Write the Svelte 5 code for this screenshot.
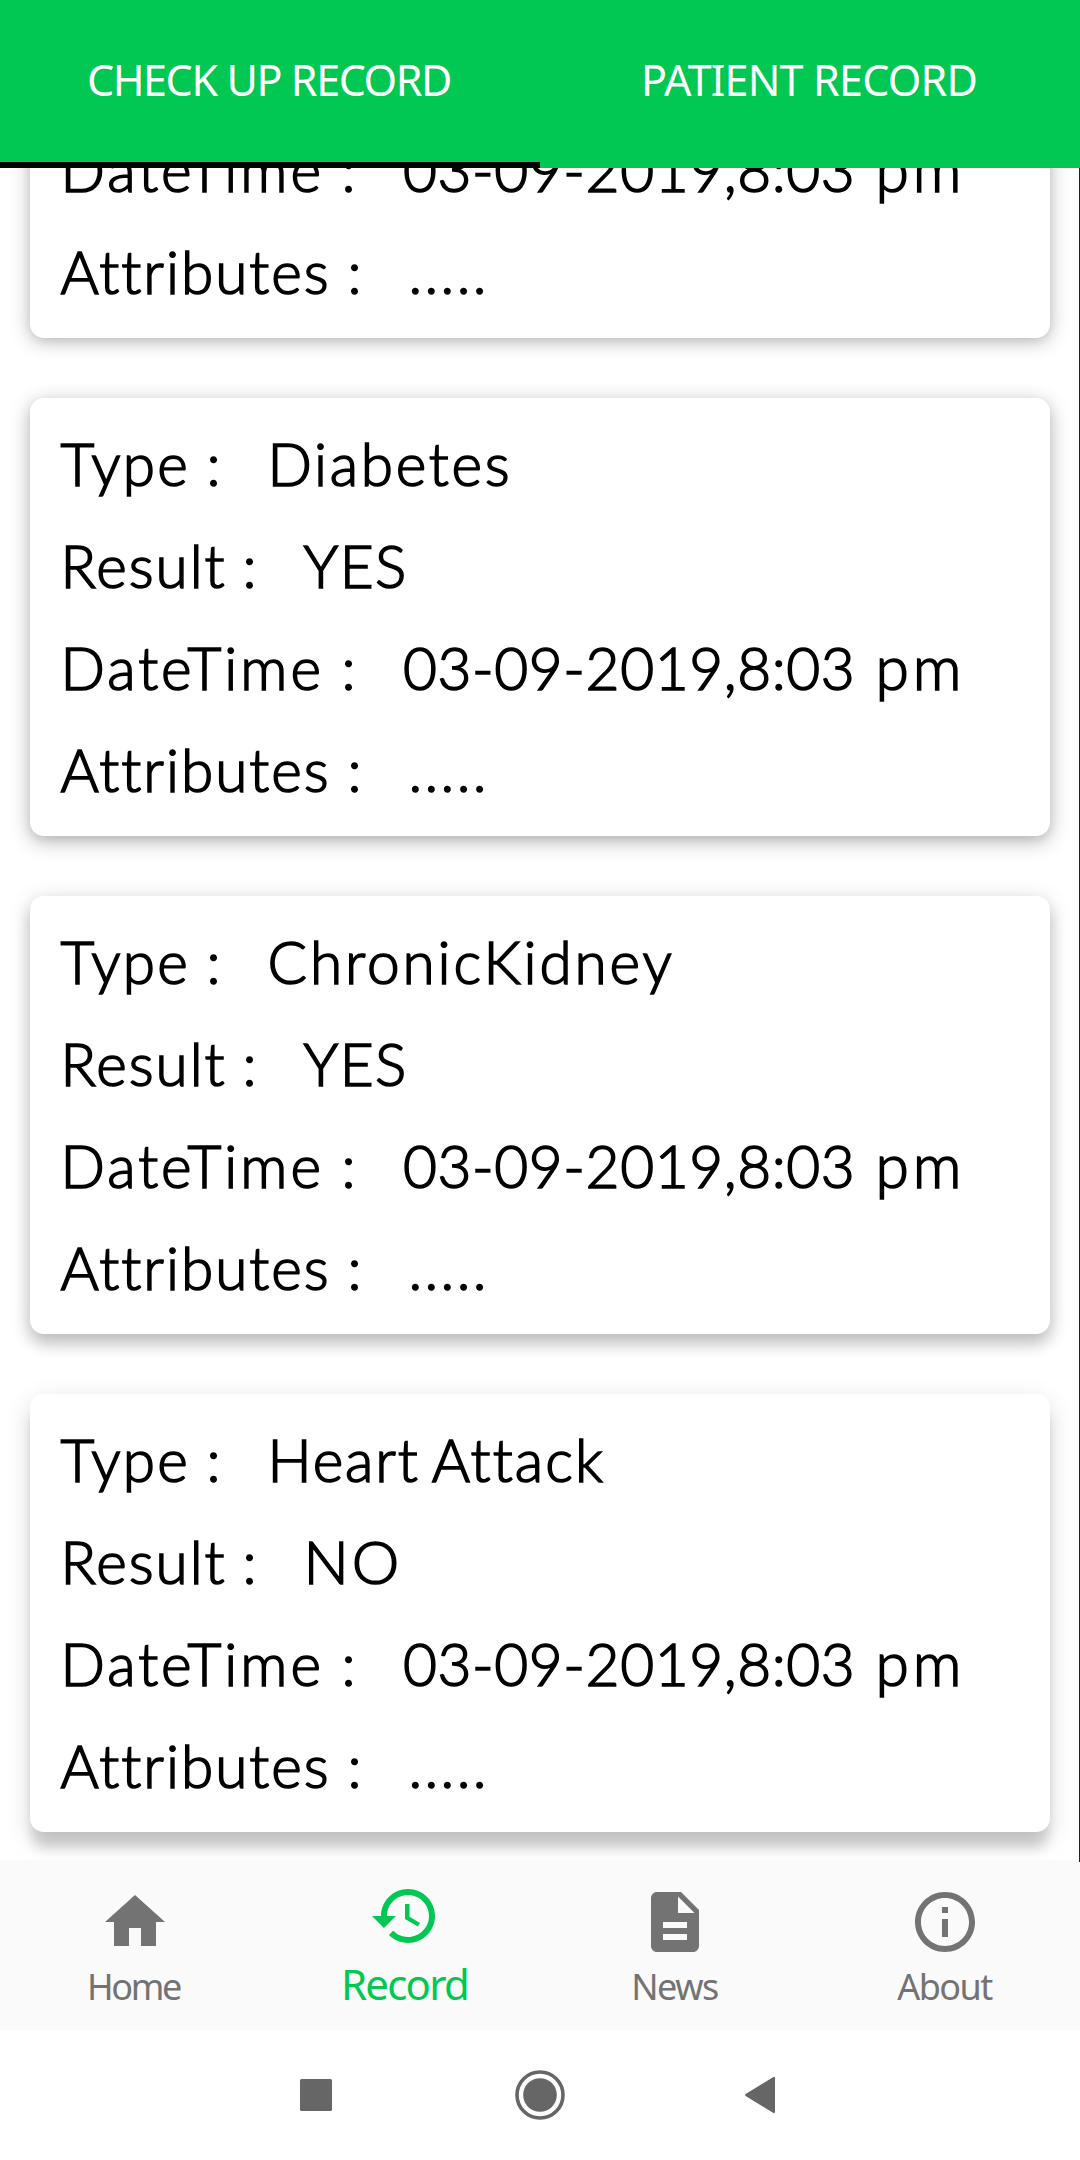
<script>
  const when = [
    { text: '03-09-2019,8:03', cls: 'date' },
    { text: 'pm', cls: 'pm' }
  ];
  const stamp = [
    { label: 'DateTime', cls: 'datetime', value: when },
    { label: 'Attributes', cls: 'attributes', value: [{ text: '.....', cls: 'dots' }] }
  ];
  const record = (type, result) => [
    { label: 'Type', cls: 'type', value: type },
    { label: 'Result', cls: 'result', value: result },
    ...stamp
  ];
  const yes = [{ text: 'YES', cls: 'yes' }];
  const no = [{ text: 'NO', cls: 'no' }];
  const records = [
    stamp,
    record([{ text: 'Diabetes', cls: 'diabetes' }], yes),
    record([{ text: 'ChronicKidney', cls: 'kidney' }], yes),
    record([{ text: 'Heart', cls: 'heart' }, { text: 'Attack', cls: 'attack' }], no)
  ];
  const nav = [
    { label: 'Home', d: 'M10 20v-6h4v6h5v-8h3L12 3 2 12h3v8z' },
    {
      label: 'Record',
      active: true,
      d: 'M13 3c-4.97 0-9 4.03-9 9H1l3.89 3.89.07.14L9 12H6c0-3.87 3.13-7 7-7s7 3.13 7 7-3.13 7-7 7c-1.93 0-3.68-.79-4.94-2.06l-1.42 1.42C8.27 19.99 10.51 21 13 21c4.97 0 9-4.03 9-9s-4.03-9-9-9zm-1 5v5l4.28 2.54.72-1.21-3.5-2.08V8H12z'
    },
    {
      label: 'News',
      d: 'M14 2H6c-1.1 0-1.99.9-1.99 2L4 20c0 1.1.89 2 1.99 2H18c1.1 0 2-.9 2-2V8l-6-6zm2 16H8v-2h8v2zm0-4H8v-2h8v2zm-3-5V3.5L18.5 9H13z'
    },
    {
      label: 'About',
      d: 'M11 17h2v-6h-2v6zm1-15C6.48 2 2 6.48 2 12s4.48 10 10 10 10-4.48 10-10S17.52 2 12 2zm0 18c-4.41 0-8-3.59-8-8s3.59-8 8-8 8 3.59 8 8-3.59 8-8 8zM11 9h2V7h-2v2z'
    }
  ];
</script>

<div class="screen">
  <header class="tabs">
    <div class="tab selected"><span class="checkup">CHECK UP RECORD</span></div>
    <div class="tab"><span class="patient">PATIENT RECORD</span></div>
  </header>

  <main class="list">
    {#each records as rows}
      <section class="card">
        {#each rows as row}
          <div class="row">
            <span class="label {row.cls}">{row.label}</span>
            <span class="colon">:</span>
            <span class="value">
              {#each row.value as part}<span class={part.cls}>{part.text}</span>{/each}
            </span>
          </div>
        {/each}
      </section>
    {/each}
  </main>

  <nav class="bottom">
    {#each nav as item}
      <div class="item {item.label.toLowerCase()}" class:active={item.active}>
        <svg viewBox="0 0 24 24" width="72" height="72"><path d={item.d} fill="currentColor" /></svg>
        <span>{item.label}</span>
      </div>
    {/each}
  </nav>

  <footer class="system">
    <svg width="34" height="34" viewBox="0 0 34 34"><rect x="1" y="1" width="32" height="32" rx="1.5" /></svg>
    <svg width="50" height="50" viewBox="0 0 50 50">
      <circle cx="25" cy="25" r="23" fill="none" stroke="#666" stroke-width="3.6" />
      <circle cx="25" cy="25" r="16.8" />
    </svg>
    <svg class="back" width="34" height="38" viewBox="0 0 34 38">
      <path d="M3 17.8 30 1.2Q32 .2 32 2.2V35.8Q32 37.8 30 36.8L3 20.2Q1 19 3 17.8z" />
    </svg>
  </footer>
</div>

<style>
  :global(body) {
    margin: 0;
    background: #fff;
  }
  .screen {
    width: 1080px;
    height: 2160px;
    display: flex;
    flex-direction: column;
    overflow: hidden;
    background: #fff;
    font-family: 'Noto Sans', sans-serif;
  }
  .tabs {
    display: flex;
    height: 168px;
    flex: none;
    background: #00c853;
    color: #fff;
    z-index: 1;
  }
  .tab {
    width: 540px;
    box-sizing: border-box;
    border-bottom: 6px solid transparent;
    padding: 0 2px 3px 0;
    display: flex;
    align-items: center;
    justify-content: center;
    font-size: 43px;
    line-height: 60px;
    white-space: nowrap;
  }
  .tab.selected {
    border-color: #000;
  }
  .checkup {
    letter-spacing: -1.4px;
  }
  .patient {
    letter-spacing: -0.8px;
  }
  .list {
    height: 1694px;
    flex: none;
    box-sizing: border-box;
    border-right: 1px solid #222;
    padding: 0 29px 30px 30px;
    display: flex;
    flex-direction: column;
    justify-content: flex-end;
    gap: 60px;
    overflow: hidden;
  }
  .card {
    height: 438px;
    flex: none;
    box-sizing: border-box;
    padding: 14px 29px 16px 30.5px;
    display: flex;
    flex-direction: column;
    justify-content: flex-end;
    border-radius: 14px;
    background: #fff;
    box-shadow: 0 3px 20px rgba(0, 0, 0, 0.28), 0 3px 8px rgba(0, 0, 0, 0.06);
  }
  .card:nth-child(1) {
    height: 236px;
  }
  .card:nth-child(2) {
    box-shadow: 0 5px 20px rgba(0, 0, 0, 0.3), 0 4px 8px rgba(0, 0, 0, 0.05);
  }
  .card:nth-child(3) {
    box-shadow: 0 10px 16px rgba(0, 0, 0, 0.19), 0 3px 22px rgba(0, 0, 0, 0.14);
  }
  .card:nth-child(4) {
    box-shadow: 0 18px 12px -2px rgba(0, 0, 0, 0.15), 0 8px 26px rgba(0, 0, 0, 0.15);
  }
  .row {
    display: flex;
    flex: none;
    height: 102px;
    font-family: Lato, sans-serif;
    font-weight: 300;
    font-size: 58.5px;
    line-height: 102px;
    font-variant-ligatures: none;
    letter-spacing: 1.4px;
    -webkit-text-stroke: 1.6px #000;
    color: #000;
    white-space: nowrap;
  }
  .label {
    flex: none;
  }
  .colon {
    flex: none;
    width: 61px;
  }
  .type {
    width: 146px;
    letter-spacing: 2.2px;
  }
  .result {
    width: 182px;
    letter-spacing: 2px;
  }
  .datetime {
    width: 281px;
    letter-spacing: 3px;
  }
  .attributes {
    width: 287px;
    letter-spacing: 2px;
  }
  .value {
    display: flex;
  }
  .diabetes {
    letter-spacing: 2.7px;
  }
  .kidney {
    letter-spacing: 2.9px;
  }
  .heart {
    letter-spacing: 1.9px;
    margin-right: 12px;
  }
  .attack {
    letter-spacing: 2.1px;
  }
  .no {
    font-size: 60px;
    letter-spacing: 3px;
  }
  .date {
    letter-spacing: 0.6px;
    margin-left: 0.5px;
    margin-right: 20px;
  }
  .pm {
    font-size: 60.5px;
    letter-spacing: 4px;
  }
  .dots {
    letter-spacing: 2.4px;
  }

  .bottom {
    display: grid;
    grid-template-columns: repeat(4, 270px);
    height: 168px;
    flex: none;
    background: #fafafa;
    color: #737373;
    box-shadow: 0 0 4px rgba(0, 0, 0, 0.06);
    z-index: 1;
  }
  .item {
    display: flex;
    flex-direction: column;
    align-items: center;
    padding-top: 24px;
    font-size: 36px;
    line-height: 50px;
    letter-spacing: -1.5px;
  }
  .item span {
    margin-right: 1px;
  }
  .item svg {
    flex: none;
    margin-bottom: 4px;
  }
  .item.home {
    letter-spacing: -2.4px;
  }
  .item.home span {
    margin-right: 3px;
  }
  .item.active {
    padding-top: 18px;
    color: #00c853;
    font-size: 42px;
    letter-spacing: -1.8px;
  }
  .item.active svg {
    margin-bottom: 7px;
  }
  .system {
    flex: 1;
    display: flex;
    align-items: center;
    justify-content: center;
    gap: 182px;
    background: #fff;
    z-index: 2;
  }
  .system svg {
    fill: #666;
  }
  .back {
    margin: 0 4px 0 -4px;
  }
</style>
